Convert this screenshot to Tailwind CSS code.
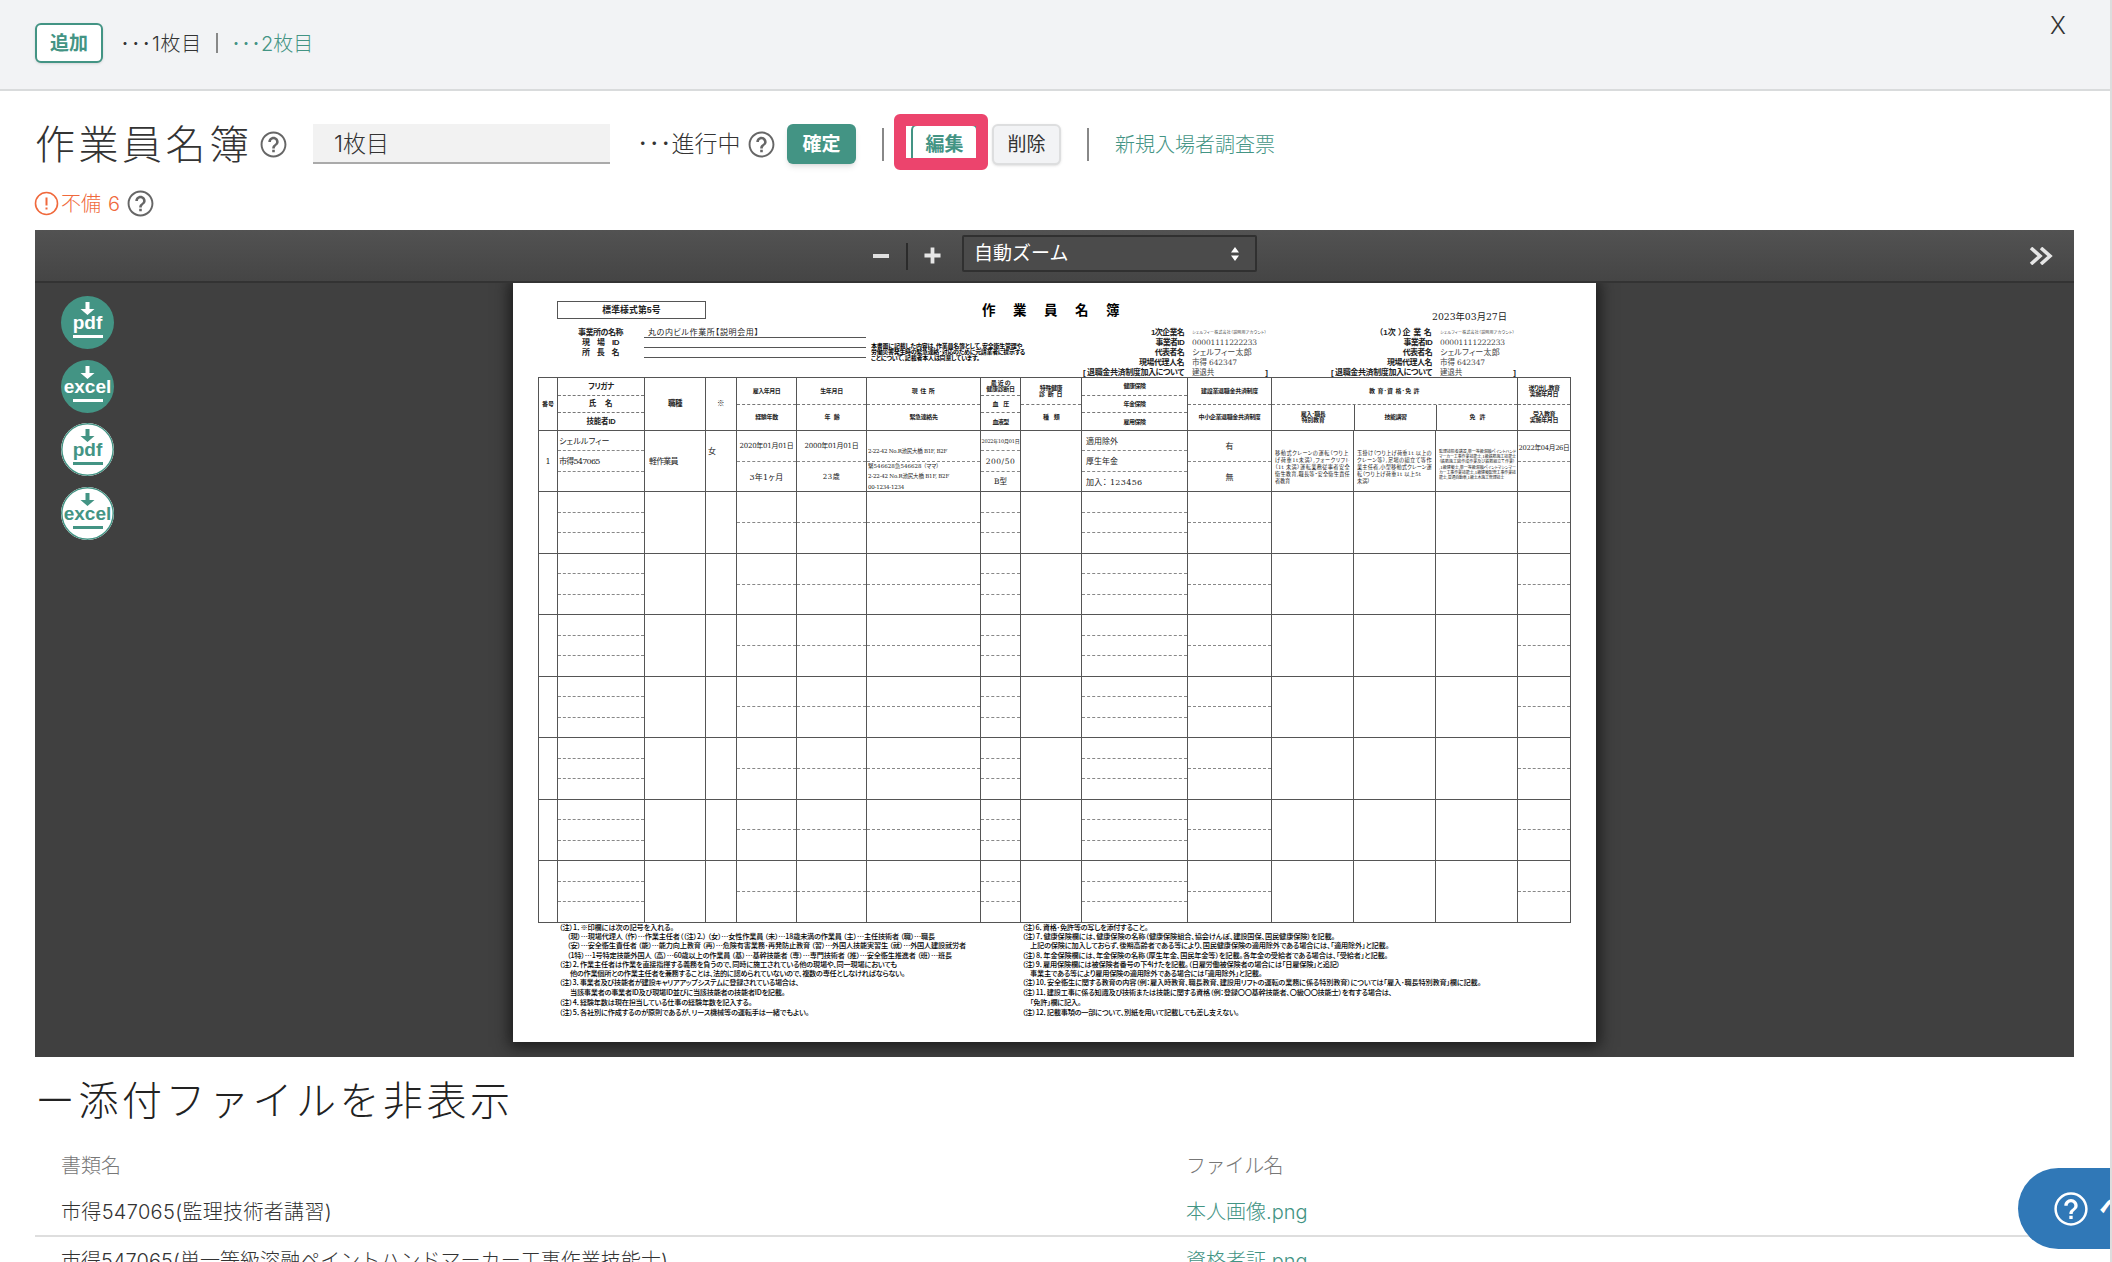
<!DOCTYPE html>
<html lang="ja">
<head>
  <meta charset="UTF-8" />
  <meta name="viewport" content="width=device-width, initial-scale=1.0" />
  <title>作業員名簿</title>
  <script src="https://cdn.jsdelivr.net/npm/@tailwindcss/browser@4"></script>
</head>
<body class="relative h-[1262px] overflow-hidden border-r-2 border-[#dcdddd] bg-white font-['Inter','Noto_Sans_CJK_JP',sans-serif] text-xl font-light text-[#333]">

  <svg class="hidden">
    <symbol id="help" viewBox="0 0 24 24">
      <path fill="currentColor" d="M11 18h2v-2h-2v2zm1-16C6.48 2 2 6.48 2 12s4.480 10 10 10 10-4.480 10-10S17.520 2 12 2zm0 18.500c-4.690 0-8.500-3.810-8.500-8.500S7.310 3.500 12 3.500s8.500 3.810 8.500 8.500-3.810 8.500-8.500 8.500zM12 6c-2.210 0-4 1.790-4 4h2c0-1.100.9-2 2-2s2 .9 2 2c0 2-3 1.750-3 5h2c0-2.250 3-2.500 3-5 0-2.210-1.790-4-4-4z" />
    </symbol>
    <symbol id="dl" viewBox="0 0 53 53">
      <path fill="currentColor" d="M24.500 6h4v7h5L26.500 19 19.500 13h5zM12 39h30v3H12z" />
    </symbol>
  </svg>

  <!-- sheet tabs -->
  <header class="flex h-[91px] items-start justify-between border-b-2 border-[#d9dbdc] bg-[#f2f3f5] pl-[35px]">
    <div class="mt-[23px] flex h-10 items-center">
      <button class="h-10 w-[68px] rounded-md border-2 border-[#439484] bg-white text-[19px] leading-none font-bold text-[#439484] shadow-sm">追加</button>
      <span class="ml-[17px] w-[82px] pt-px whitespace-nowrap"><span data-w="82">･･･1枚目</span></span>
      <span class="ml-[14px] h-5 w-[2px] bg-[#888]"></span>
      <a class="ml-[13px] pt-px whitespace-nowrap text-[#439484]">･･･2枚目</a>
    </div>
    <button class="mt-[10px] mr-[43px] w-[18px] text-center text-2xl leading-8">X</button>
  </header>

  <!-- title row -->
  <div class="mt-[24px] flex h-[58px] items-center pl-[35px]">
    <h1 class="w-[219px] whitespace-nowrap pt-px text-[40px] leading-none tracking-[3.5px]">作業員名簿</h1>
    <svg class="ml-[4px] size-[31px] shrink-0 text-[#666]"><use href="#help" /></svg>
    <div class="ml-[24px] flex h-10 w-[297px] items-center border-b-2 border-[#aaa] bg-[#f2f2f2] pt-[2px] pl-[21px] text-[23px]">1枚目</div>
    <span class="ml-[27px] w-[104px] pt-px whitespace-nowrap text-[23px]">･･･進行中</span>
    <svg class="ml-[5px] size-[31px] shrink-0 text-[#666]"><use href="#help" /></svg>
    <button class="ml-[10px] h-10 w-[69px] rounded-md bg-[#439484] text-[19px] leading-none font-bold text-white shadow-md">確定</button>
    <span class="ml-[26px] h-[33px] w-[2px] bg-[#888]"></span>
    <div class="relative ml-[27px]">
      <button class="block h-10 w-[67px] rounded-md border-2 border-[#439484] bg-white text-[19px] leading-none font-bold text-[#439484]">編集</button>
      <span class="absolute -top-[10px] -left-[17px] h-[56px] w-[94px] rounded-md border-[12px] border-[#ec446d]"></span>
    </div>
    <button class="ml-[14px] h-[41px] w-[69px] rounded-md border-2 border-[#dddedf] bg-[#f2f3f5] text-[19px] leading-none font-normal shadow-sm">削除</button>
    <span class="ml-[26px] h-[33px] w-[2px] bg-[#888]"></span>
    <a class="ml-[26px] pt-px whitespace-nowrap text-[#439484]">新規入場者調査票</a>
  </div>

  <div class="mt-[15px] flex h-[31px] items-center pl-[34px] text-[#f0693c]">
    <svg class="size-[25px]" viewBox="0 0 25 25" fill="none" stroke="currentColor" stroke-width="1.6">
      <circle cx="12.500" cy="12.500" r="11" /><path stroke-width="2" d="M12.500 6.500v8M12.500 16.500v2" />
    </svg>
    <span class="ml-[2px] w-[64px] whitespace-nowrap [word-spacing:1.500px]">不備 6</span>
    <svg class="size-[31px] text-[#666]"><use href="#help" /></svg>
  </div>

  <!-- viewer -->
  <main class="mt-[11px] ml-[35px] flex h-[827px] w-[2039px] flex-col bg-[#404040]">
    <div class="flex h-[53px] shrink-0 items-start border-b-2 border-[#333] bg-linear-to-b from-[#525252] to-[#454545] text-[#e6e6e6]">
      <span class="mt-[24px] ml-[838px] h-1 w-4 bg-[#e0e0e0]"></span>
      <span class="mt-[13px] ml-[17px] h-[27px] w-[2px] bg-[#2b2b2b]"></span>
      <svg class="mt-[17px] ml-[16px] size-[17px]" viewBox="0 0 18 18"><path stroke="currentColor" stroke-width="4" d="M9 .5v17M.5 9h17" /></svg>
      <div class="mt-[5px] ml-[21px] flex h-[37px] w-[295px] items-center justify-between rounded-xs border-2 border-[#303030] bg-[#4b4b4b] pr-[13px] pl-[10px] text-[19px] font-normal text-white">
        <span class="pt-[2px]">自動ズーム</span>
        <svg class="size-[14px]" viewBox="0 0 14 14" fill="currentColor"><path d="M7 0l4 5.500H3zM7 14l4-5.500H3z" /></svg>
      </div>
      <svg class="mt-[17px] mr-[21px] ml-auto h-[18px] w-[24px]" viewBox="0 0 24 18" fill="none" stroke="currentColor" stroke-width="3.600"><path d="M2 1l9 8-9 8M12 1l9 8-9 8" /></svg>
    </div>

    <div class="flex min-h-0 grow overflow-hidden">
      <div class="mt-[13px] ml-[26px] flex w-[53px] flex-col gap-[10.700px] font-['Liberation_Sans',sans-serif] text-[19px] font-bold">
        <svg class="size-[53px] rounded-full bg-[#439484] text-white" viewBox="0 0 53 53"><use href="#dl" /><text x="26.500" y="33" text-anchor="middle" fill="currentColor">pdf</text></svg>
        <svg class="size-[53px] rounded-full bg-[#439484] text-white" viewBox="0 0 53 53"><use href="#dl" /><text x="26.500" y="33" text-anchor="middle" fill="currentColor">excel</text></svg>
        <svg class="size-[53px] rounded-full bg-white text-[#439484]" viewBox="0 0 53 53"><circle cx="26.500" cy="26.500" r="25.700" fill="none" stroke="currentColor" stroke-width="1.500" /><use href="#dl" /><text x="26.500" y="33" text-anchor="middle" fill="currentColor">pdf</text></svg>
        <svg class="size-[53px] rounded-full bg-white text-[#439484]" viewBox="0 0 53 53"><circle cx="26.500" cy="26.500" r="25.700" fill="none" stroke="currentColor" stroke-width="1.500" /><use href="#dl" /><text x="26.500" y="33" text-anchor="middle" fill="currentColor">excel</text></svg>
      </div>

      <!-- roster sheet -->
      <section class="ml-[399px] h-[759px] w-[1083px] bg-white font-['Liberation_Sans','Noto_Sans_CJK_JP',sans-serif] text-[8px] leading-none font-bold whitespace-nowrap text-[#222] shadow-[0_1px_14px_4px_#1c1c1c] [font-feature-settings:'palt']">
        <div class="flex h-[45px] items-start">
          <div class="mt-[18px] ml-[44px] flex h-[18px] w-[149px] items-center justify-center border border-[#555] text-[8.800px]"><span data-w="58.5">標準様式第5号</span></div>
          <h2 class="mt-[21px] ml-[276px] text-[13.5px] tracking-[17.5px] text-black">作業員名簿</h2>
          <span class="mt-[29px] mr-[89px] ml-auto font-['DejaVu_Serif','Noto_Sans_CJK_JP',serif] text-[9.300px] font-normal"><span data-w="75">2023年03月27日</span></span>
        </div>

        <div class="flex h-[49px]">
          <div class="ml-[44px] grid h-[30px] w-[309px] grid-cols-[87px_222px] grid-rows-[10px_10px_10px] *:flex *:items-center">
            <span class="justify-center"><span data-w="45">事業所の名称</span></span>
            <span class="border-b border-[#555] pl-1 font-['DejaVu_Serif','Noto_Sans_CJK_JP',serif] font-normal"><span data-w="111">丸の内ビル作業所【説明会用】</span></span>
            <span class="justify-center"><span data-w="37">現　場　ID</span></span>
            <span class="border-b border-[#555]"></span>
            <span class="justify-center"><span data-w="37">所　長　名</span></span>
            <span class="border-b border-[#555]"></span>
          </div>
          <div class="mt-[15px] ml-[5px] w-[207px] text-[6px] leading-[6.100px] text-black">
            <div><span data-w="151">本書面に記載した内容は、作業員名簿として、安全衛生管理や</span></div>
            <div><span data-w="154">労働災害発生時の緊急連絡･対応のために元請業者に提示する</span></div>
            <div><span data-w="108.5">ことについて、記載者本人は同意しています。</span></div>
          </div>
          <div id="companies" class="flex"></div>
        </div>

        <div class="ml-[25px] w-[1033px] border-r border-b border-[#555]">
          <div class="grid h-[53px] grid-cols-[19px_87px_61px_31px_60px_70px_114px_40px_61px_106px_84px_82px_82px_82px_1fr] text-[6px]" id="head"></div>
          <div id="body"></div>
        </div>

        <div class="ml-[46px] flex font-['Noto_Sans_CJK_JP',sans-serif] text-[7.200px] font-medium text-black">
          <div id="notesL" class="w-[463px]"></div>
          <div id="notesR"></div>
        </div>
      </section>
    </div>
  </main>

  <!-- attachments -->
  <h2 class="mt-[21px] ml-[35px] text-[40px] leading-[46px] tracking-[3.500px] whitespace-nowrap text-[#222]">ー添付ファイルを非表示</h2>
  <div class="ml-[35px] w-[2039px] whitespace-nowrap">
    <div class="mt-[20px] grid h-[44px] grid-cols-[1125px_1fr] items-center pl-[26px] text-[#777]">
      <span>書類名</span><span data-w="97">ファイル名</span>
    </div>
    <div class="grid h-[49px] grid-cols-[1125px_1fr] items-center border-b-2 border-[#dedede] pt-px pl-[26px]">
      <span><span data-w="271">市得547065(監理技術者講習)</span></span><a class="text-[#439484]">本人画像.png</a>
    </div>
    <div class="grid h-[49px] grid-cols-[1125px_1fr] items-center border-b-2 border-[#dedede] pt-px pl-[26px]">
      <span><span data-w="607">市得547065(単一等級溶融ペイントハンドマーカー工事作業技能士)</span></span><a class="text-[#439484]">資格者証.png</a>
    </div>
  </div>

  <button class="absolute top-[1168px] left-[2018px] flex h-[81px] w-[180px] items-center rounded-full bg-[#3078b7] pl-[33px] text-[27px] font-bold whitespace-nowrap text-white">
    <svg class="size-[40px] shrink-0" viewBox="0 0 24 24"><use href="#help" /></svg>
    <span class="ml-[8px]">ヘルプ</span>
  </button>

  <script>
    const serif = "font-['DejaVu_Serif','Noto_Sans_CJK_JP',serif] font-normal";

    // text with the width it should take on the sheet
    const t = ([text, w]) => `<span data-w="${w}">${text}</span>`;

    const companies = [['1次企業名', 33], ['（1次 ）企 業 名', 53]];
    document.getElementById('companies').innerHTML = companies.map(c => {
      const rows = [
        [c, ['シェルフィー株式会社（説明用アカウント）', 74.6], 'text-[4px]'],
        [['事業者ID', 28.6], ['00001111222233', 65], 'text-[7.500px]'],
        [['代表者名', 29.3], ['シェルフィー太郎', 60], ''],
        [['現場代理人名', 45], ['市得 642347', 45], 'text-[7.500px]'],
        [['[ 退職金共済制度加入について', 101], ['建退共', 22], 'text-[7.500px]'],
      ];
      return `<div class="w-[248px]">` + rows.map(([a, b, size], i) => `
        <div class="flex h-[10px] w-[190px] items-center">
          <span class="flex w-[106px] justify-end">${t(a)}</span>
          <span class="ml-[8px] flex items-center text-[#444] ${serif} ${size}">${t(b)}</span>
          ${i === 4 ? '<span class="ml-auto">]</span>' : ''}
        </div>`).join('') + `</div>`;
    }).join('');

    // heading columns: each entry is a stack of cells, each cell a list of lines
    const head = [
      [[['番号', 12]]],
      [[['フリガナ', 25.5]], [['氏　名', 24.5]], [['技能者ID', 29]]],
      [[['職種', 14]]],
      [[['<span class="font-[\'Noto_Sans_CJK_JP\']">※</span>', 8]]],
      [[['雇入年月日', 27.5]], [['経験年数', 22.7]]],
      [[['生年月日', 22.7]], [['年　齢', 14]]],
      [[['現 住 所', 23.4]], [['緊急連絡先', 28]]],
      [[['最 近 の', 19.6], ['健康診断日', 28.6]], [['血　圧', 16]], [['血液型', 16]]],
      [[['特殊健康', 22.4], ['診 断 日', 24]], [['種　類', 16]]],
      [[['健康保険', 22]], [['年金保険', 22]], [['雇用保険', 22]]],
      [[['建設業退職金共済制度', 57]], [['中小企業退職金共済制度', 62]]],
      'edu',
      [[['送り出し教育', 31], ['実施年月日', 28.6]], [['受入教育', 22], ['実施年月日', 28.6]]],
    ];
    const big = [1, 2, 3];
    const lines = c => c.map(l => `<div>${t(l)}</div>`).join('');
    document.getElementById('head').innerHTML = head.map((col, i) => {
      if (col === 'edu') return `
        <div class="col-span-3 flex flex-col border-t border-l border-[#555]">
          <div class="flex flex-1 items-center justify-center border-b border-dashed border-[#777]">${t(['教 育･資 格･免 許', 51])}</div>
          <div class="grid flex-1 grid-cols-[82px_82px_1fr] text-center *:flex *:flex-col *:justify-center">
            <div>${lines([['雇入･職長', 24.6], ['特別教育', 23]])}</div>
            <div class="border-l border-[#555]">${lines([['技能講習', 22]])}</div>
            <div class="border-l border-[#555]">${lines([['免　許', 15]])}</div>
          </div>
        </div>`;
      return `<div class="flex flex-col border-t border-l border-[#555] text-center ${big.includes(i) ? 'text-[7.500px]' : ''}">` +
        col.map((c, j) => `<div class="flex flex-1 flex-col justify-center ${j ? 'border-t border-dashed border-[#777]' : ''}">${lines(c)}</div>`).join('') + `</div>`;
    }).join('');

    // first worker: [alignment, stacked cells]
    const worker = [
      ['text-center pt-[2px]', [[['1', 5]]]],
      ['pl-px pt-[2px]', [[['シェルルフィー', 50.6]], [['市得547065', 40.6]], []]],
      ['pl-1 pt-[2px]', [[['軽作業員', 28.6]]]],
      ['pl-[2px] pb-[18px]', [[['女', 7]]]],
      ['text-center pt-[2px] text-[7px]', [[['2020年01月01日', 54]], [['<span class="text-[8px]">3年1ヶ月</span>', 34]]]],
      ['text-center pt-[2px] text-[7px]', [[['2000年01月01日', 54]], [['23歳', 17.6]]]],
      ['pl-px text-[5.500px] leading-[10.400px]', [[['&nbsp;', 2], ['2-22-42 No.R池尻大橋 B1F, B2F', 79]], [['緊546628急546628 （ママ）', 71], ['2-22-42 No.R池尻大橋 B1F, B2F', 81], ['00-1234-1234', 36]]]],
      ['text-center pt-px text-[7.500px]', [[['<span class="text-[5px]">2022年10月01日</span>', 38]], [['200/50', 29.6]], [['B型', 13]]]],
      ['', [[]]],
      ['pl-1 pt-[2px]', [[['適用除外', 32]], [['厚生年金', 32]], [['加入： 123456', 56.5]]]],
      ['text-center pt-[2px]', [[['有', 8]], [['無', 8]]]],
      ['pl-[3px] pt-[13px] text-[5.200px] leading-[7px]', [[['移動式クレーンの運転（つり上', 74], ['げ荷重1t未満）,フォークリフト', 75], ['（1t 未満）運転業務従事者安全', 75], ['衛生教育,職長等・安全衛生責任', 75], ['者教育', 15]]]],
      ['pl-[3px] pt-[13px] text-[5.200px] leading-[7px]', [[['玉掛け（つり上げ荷重1t 以上の', 75], ['クレーン等）,足場の組立て等作', 75], ['業主任者,小型移動式クレーン運', 75], ['転（つり上げ荷重1t 以上5t', 64], ['未満）', 13]]]],
      ['pl-[3px] pt-[7px] text-[4px] leading-[5.300px]', [[['監理技術者講習,単一等級溶融ペイントハンド', 77], ['マーカー工事作業技能士,1級鉄筋施工技能士', 77], ['（鉄筋施工図作成作業及び鉄筋組立て作業）', 76], [',1級建築士,単一等級溶融ペイントマシンマー', 77], ['カー工事作業技能士,1級建築配管工事作業技', 77], ['能士,普通自動車,1級土木施工管理技士', 65]]]],
      ['text-center pt-1 text-[6.700px]', [[['2022年04月26日', 51]], []]],
    ];
    const row = filled => `
      <div class="grid h-[61.450px] grid-cols-[19px_87px_61px_31px_60px_70px_114px_40px_61px_106px_84px_82px_82px_82px_1fr] ${serif}">` +
      worker.map(([align, cells]) => `<div class="flex min-h-0 flex-col border-t border-l border-[#555]">` +
        cells.map((c, j) => `<div class="flex min-h-0 flex-1 flex-col justify-center ${filled ? align : ''} ${j ? 'border-t border-dashed border-[#888]' : ''}">${filled ? lines(c) : ''}</div>`).join('') + `</div>`).join('') + `</div>`;
    document.getElementById('body').innerHTML = row(true) + row(false).repeat(7);

    // notes: [indent, text, width, line height]
    const notesL = [
      [0, '（注）1．※印欄には次の記号を入れる。', 115, 9.6],
      [8, '（現）…現場代理人 （作）…作業主任者（（注）2.） （女）…女性作業員 （未）…18歳未満の作業員 （主）…主任技術者 （職）…職長', 368, 9.3],
      [8, '（安）…安全衛生責任者 （能）…能力向上教育 （再）…危険有害業務･再発防止教育 （習）…外国人技能実習生 （就）…外国人建設就労者', 399, 9.2],
      [8, '（1特）…1号特定技能外国人 （高）…60歳以上の作業員 （基）…基幹技能者 （専）…専門技術者 （推）…安全衛生推進者 （班）…班長', 385, 9.1],
      [0, '（注）2．作業主任者は作業を直接指揮する義務を負うので、同時に施工されている他の現場や、同一現場においても', 338, 9],
      [11, '他の作業個所との作業主任者を兼務することは、法的に認められていないので、複数の専任としなければならない。', 335, 9.4],
      [0, '（注）3．事業者及び技能者が建設キャリアアップシステムに登録されている場合は、', 240, 9.6],
      [11, '当該事業者の事業者ID及び現場ID並びに当該技能者の技能者IDを記載。', 215, 9.4],
      [0, '（注）4．経験年数は現在担当している仕事の経験年数を記入する。', 193, 10.4],
      [0, '（注）5．各社別に作成するのが原則であるが、リース機械等の運転手は一緒でもよい。', 250, 11],
    ];
    const notesR = [
      [0, '（注）6．資格･免許等の写しを添付すること。', 126, 9.6],
      [0, '（注）7．健康保険欄には、健康保険の名称（健康保険組合、協会けんぽ、建設国保、国民健康保険）を記載。', 313, 9.3],
      [8, '上記の保険に加入しておらず、後期高齢者である等により、国民健康保険の適用除外である場合には、「適用除外」と記載。', 359, 9.2],
      [0, '（注）8．年金保険欄には、年金保険の名称（厚生年金、国民年金等）を記載。各年金の受給者である場合は、「受給者」と記載。', 366, 9.1],
      [0, '（注）9．雇用保険欄には被保険者番号の下4けたを記載。（日雇労働被保険者の場合には「日雇保険」と追記）', 318, 9],
      [8, '事業主である等により雇用保険の適用除外である場合には「適用除外」と記載。', 232, 9.4],
      [0, '（注）10．安全衛生に関する教育の内容（例：雇入時教育、職長教育、建設用リフトの運転の業務に係る特別教育）については「雇入･職長特別教育」欄に記載。', 459, 9.6],
      [0, '（注）11．建設工事に係る知識及び技術または技能に関する資格（例：登録〇〇基幹技能者、〇級〇〇技能士）を有する場合は、', 370, 9.4],
      [8, '「免許」欄に記入。', 51, 10.4],
      [0, '（注）12．記載事項の一部について、別紙を用いて記載しても差し支えない。', 217, 11],
    ];
    const notes = list => list.map(([pad, text, w, h]) =>
      `<div class="flex items-center" style="padding-left:${pad}px;height:${h}px">${t([text, w])}</div>`).join('');
    document.getElementById('notesL').innerHTML = notes(notesL);
    document.getElementById('notesR').innerHTML = notes(notesR);

    // spread or tighten the letters until each text has its width
    function fit() {
      document.querySelectorAll('[data-w]').forEach(el => {
        el.style.display = 'inline-block';
        el.style.justifySelf = 'start';
        el.style.letterSpacing = '0px';
        const n = [...el.textContent].length;
        const gap = (el.dataset.w - el.getBoundingClientRect().width) / n;
        el.style.letterSpacing = gap + 'px';
      });
    }
    new ResizeObserver(fit).observe(document.querySelector('section'));
    window.addEventListener('load', fit);
    document.fonts.ready.then(fit);
  </script>
</body>
</html>
